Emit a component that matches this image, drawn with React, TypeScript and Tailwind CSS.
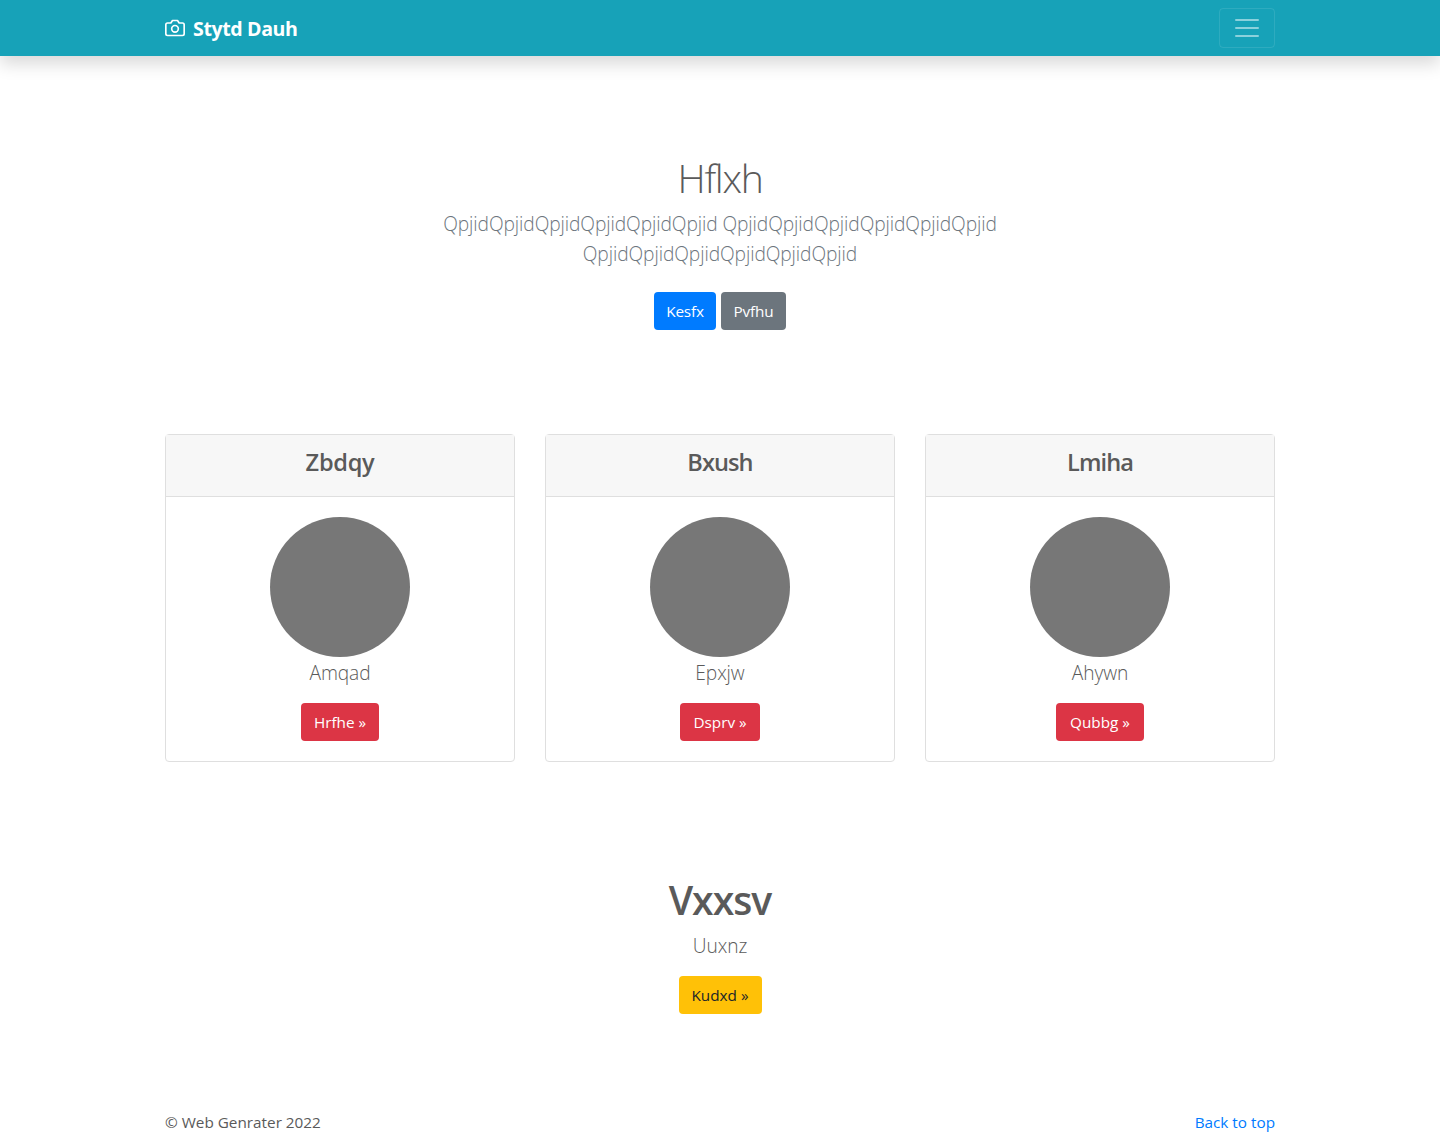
const cards = [
  { title: 'Zbdqy', text: 'Amqad', action: 'Hrfhe »', titleSpacing: 'tracking-[-0.3px]', width: 'w-[78px]' },
  { title: 'Bxush', text: 'Epxjw', action: 'Dsprv »', titleSpacing: 'tracking-[-0.95px]', width: 'w-[80px]' },
  { title: 'Lmiha', text: 'Ahywn', action: 'Qubbg »', titleSpacing: 'tracking-[-0.95px]', width: 'w-[88px]' },
];

const btn = 'flex h-[38px] items-center justify-center rounded-[4px] text-[15.3px] whitespace-nowrap';
const lead = 'text-[19.2px] leading-[30px] font-light tracking-[-0.09px] whitespace-nowrap';

export default function App() {
  return (
    <div className="h-[1134px] overflow-hidden bg-white font-['Open_Sans','Noto_Sans',sans-serif] text-[#5a5a5a]">
      <header className="h-14 bg-[#17a2b8] shadow-[0_8px_16px_rgba(0,0,0,0.15)]">
        <div className="mx-auto flex h-full w-[1110px] items-center justify-between">
          <a className="flex items-center text-white">
            <svg width="20" height="20" viewBox="0 0 24 24" fill="none" stroke="currentColor" strokeWidth="2" strokeLinecap="round" strokeLinejoin="round" className="mr-2">
              <path d="M23 19a2 2 0 0 1-2 2H3a2 2 0 0 1-2-2V8a2 2 0 0 1 2-2h4l2-3h6l2 3h4a2 2 0 0 1 2 2z" />
              <circle cx="12" cy="13" r="4" />
            </svg>
            <strong className="pt-0.5 text-[19.6px] leading-[30px] font-bold tracking-[-0.4px]">Stytd Dauh</strong>
          </a>
          <button className="flex h-10 w-14 items-center justify-center rounded-[4px] border border-white/10" aria-label="Menu">
            <svg width="30" height="30" viewBox="0 0 30 30" stroke="rgba(255,255,255,0.5)" strokeWidth="2" strokeLinecap="round" strokeMiterlimit="10">
              <path d="M4 7h22M4 15h22M4 23h22" />
            </svg>
          </button>
        </div>
      </header>
      <main>
        <section className="flex flex-col items-center pt-[98px] text-center">
          <h1 className="h-12 text-[39.2px] leading-[48px] font-light tracking-[-1.3px]">Hflxh</h1>
          <p className={lead + ' mt-[7px] h-[60px] text-[#6c757d]'}>
            QpjidQpjidQpjidQpjidQpjidQpjid QpjidQpjidQpjidQpjidQpjidQpjid<br />
            QpjidQpjidQpjidQpjidQpjidQpjid
          </p>
          <div className="mt-[23px] flex gap-[5px]">
            <a className={btn + ' w-[62px] bg-[#007bff] tracking-[-0.15px] text-white'}>Kesfx</a>
            <a className={btn + ' w-[65px] bg-[#6c757d] tracking-[-0.15px] text-white'}>Pvfhu</a>
          </div>
        </section>
        <section className="mx-auto mt-[104px] grid w-[1110px] grid-cols-3 gap-[30px]">
          {cards.map((card) => (
            <article key={card.title} className="h-[328px] rounded-[4px] border border-[#dfdfdf] text-center">
              <div className="h-[62px] border-b border-[#dfdfdf] bg-[#f7f7f7] pt-3">
                <h4 className={'text-[23.6px] leading-[30px] font-semibold ' + card.titleSpacing}>{card.title}</h4>
              </div>
              <div className="flex flex-col items-center pt-5">
                <div className="size-[140px] rounded-full bg-[#777]" />
                <p className={lead + ' mt-px'}>{card.text}</p>
                <a className={btn + ' mt-[15px] bg-[#dc3545] text-white ' + card.width}>{card.action}</a>
              </div>
            </article>
          ))}
        </section>
        <section className="flex flex-col items-center pt-[114px] text-center">
          <h2 className="text-[39.2px] leading-[48px] font-semibold tracking-[-1px]">Vxxsv</h2>
          <p className={lead + ' mt-[7px]'}>Uuxnz</p>
          <a className={btn + ' mt-[15px] w-[83px] bg-[#ffc107] text-[#212529]'}>Kudxd »</a>
        </section>
      </main>
      <footer className="mx-auto mt-[96px] flex w-[1110px] justify-between text-[15.3px] leading-6">
        <p>© Web Genrater 2022</p>
        <a className="text-[#007bff]">Back to top</a>
      </footer>
    </div>
  );
}
